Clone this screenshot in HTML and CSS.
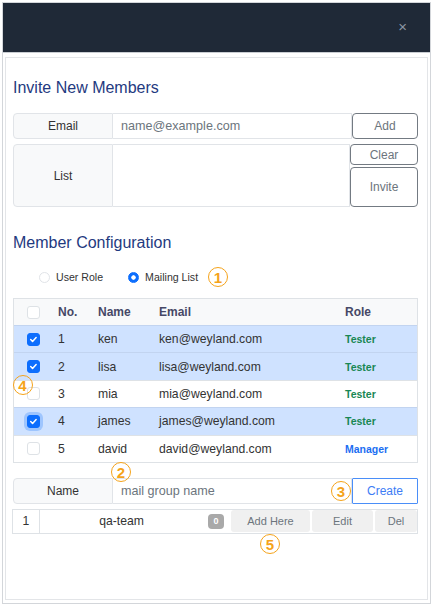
FILE: index.html
```html
<!DOCTYPE html>
<html>
<head>
<meta charset="utf-8">
<link rel="stylesheet" href="styles.css">
</head>
<body>
<div class="frame">
  <div class="topbar"><span class="close">×</span></div>
  <div class="body">
    <div class="card">
      <h2 class="title t1">Invite New Members</h2>
      <div class="group">
        <span class="lbl">Email</span>
        <input class="field" type="text" placeholder="name@example.com">
        <button class="btn add">Add</button>
      </div>
      <div class="group g-list">
        <span class="lbl">List</span>
        <textarea class="field area"></textarea>
        <div class="stack">
          <button class="btn clear">Clear</button>
          <button class="btn invite">Invite</button>
        </div>
      </div>

      <h2 class="title t2">Member Configuration</h2>
      <div class="radios">
        <label class="opt"><span class="radio"></span>User Role</label>
        <label class="opt"><span class="radio on"></span>Mailing List</label>
      </div>

      <div class="tbl">
        <div class="tr th">
          <span class="cbc"><span class="cb"></span></span>
          <span>No.</span><span>Name</span><span>Email</span><span>Role</span>
        </div>
        <div class="tr sel">
          <span class="cbc"><span class="cb on"><svg viewBox="0 0 13 13" width="11" height="11"><path d="M3.2 6.6 L5.4 8.8 L9.6 4.2" fill="none" stroke="#fff" stroke-width="1.8" stroke-linecap="round" stroke-linejoin="round"/></svg></span></span>
          <span>1</span><span>ken</span><span>ken@weyland.com</span><span class="role tester">Tester</span>
        </div>
        <div class="tr sel">
          <span class="cbc"><span class="cb on"><svg viewBox="0 0 13 13" width="11" height="11"><path d="M3.2 6.6 L5.4 8.8 L9.6 4.2" fill="none" stroke="#fff" stroke-width="1.8" stroke-linecap="round" stroke-linejoin="round"/></svg></span></span>
          <span>2</span><span>lisa</span><span>lisa@weyland.com</span><span class="role tester">Tester</span>
        </div>
        <div class="tr">
          <span class="cbc"><span class="cb"></span></span>
          <span>3</span><span>mia</span><span>mia@weyland.com</span><span class="role tester">Tester</span>
        </div>
        <div class="tr sel">
          <span class="cbc"><span class="cb on focus"><svg viewBox="0 0 13 13" width="11" height="11"><path d="M3.2 6.6 L5.4 8.8 L9.6 4.2" fill="none" stroke="#fff" stroke-width="1.8" stroke-linecap="round" stroke-linejoin="round"/></svg></span></span>
          <span>4</span><span>james</span><span>james@weyland.com</span><span class="role tester">Tester</span>
        </div>
        <div class="tr">
          <span class="cbc"><span class="cb"></span></span>
          <span>5</span><span>david</span><span>david@weyland.com</span><span class="role manager">Manager</span>
        </div>
      </div>

      <div class="group">
        <span class="lbl">Name</span>
        <input class="field" type="text" placeholder="mail group name">
        <button class="btn create">Create</button>
      </div>

      <div class="mrow">
        <span class="mno">1</span>
        <span class="mname">qa-team</span>
        <span class="badge">0</span>
        <button class="mbtn w-add">Add Here</button>
        <button class="mbtn w-edit">Edit</button>
        <button class="mbtn w-del">Del</button>
      </div>
    </div>
  </div>

  <span class="mark m1">1</span>
  <span class="mark m2">2</span>
  <span class="mark m3">3</span>
  <span class="mark m4">4</span>
  <span class="mark m5">5</span>
</div>
</body>
</html>
```

FILE: styles.css
```css
* { box-sizing: border-box; }
html, body { margin: 0; padding: 0; background: #fff; }
body { font-family: "Liberation Sans", Arial, sans-serif; color: #333; }

.frame {
  position: relative;
  margin: 2px;
  width: 429px;
  height: 602px;
  border: 1px solid #d3d6da;
  display: flex;
  flex-direction: column;
}
.topbar {
  height: 50px;
  flex: none;
  background: #1f2937;
  border-bottom: 1px solid #c9cdd2;
  display: flex;
  align-items: center;
  justify-content: flex-end;
  padding: 0 23px 3px 0;
}
.close { color: #8c96a3; font-size: 15px; line-height: 1; }

.body { flex: 1; padding: 4px 2px 3px 2px; display: flex; }
.card { flex: 1; border: 1px solid #e3e5e8; padding: 0 9px 0 7px; }

.title { margin: 0; font-size: 16px; line-height: 20px; font-weight: normal; color: #1f3a80; }
.t1 { margin-top: 20px; }
.t2 { margin-top: 26px; }

.group { display: flex; height: 26px; margin-top: 15px; }
.g-list { height: 63px; margin-top: 5px; }
.lbl {
  width: 100px; flex: none;
  background: #f8f9fa;
  border: 1px solid #e1e4e8;
  border-radius: 4px 0 0 4px;
  display: flex; align-items: center; justify-content: center;
  font-size: 12px; color: #333;
}
.field {
  flex: 1; min-width: 0;
  border: 1px solid #e1e4e8; border-left: 0;
  font: 12.6px "Liberation Sans", Arial, sans-serif;
  padding: 0 0 0 8px; margin: 0;
  color: #333; background: #fff; outline: none;
}
.field::placeholder { color: #6c757d; }
.area { resize: none; }

.btn {
  margin: 0; padding: 0;
  font: 12px "Liberation Sans", Arial, sans-serif;
  background: #fff; color: #6c757d;
  border: 1px solid #737a82; border-radius: 4px;
}
.add, .create { width: 66px; flex: none; }
.stack { width: 68px; flex: none; display: flex; flex-direction: column; gap: 2px; }
.clear { height: 21px; }
.invite { flex: 1; }
.create { border-color: #4a8ef8; color: #3d7cf5; border-radius: 1px; }

.radios {
  margin-top: 15px; height: 18px;
  display: flex; align-items: center; gap: 25px;
  padding-left: 26px;
  font-size: 10.6px; color: #333;
}
.opt { display: flex; align-items: center; gap: 6px; }
.radio { width: 11px; height: 11px; border-radius: 50%; border: 1px solid #e1e4e8; background: #fff; }
.radio.on { border-color: #0d6efd; background: radial-gradient(circle, #fff 0 1.9px, #0d6efd 2.5px); }

.tbl { margin-top: 12px; border: 1px solid #dee2e6; }
.tr {
  display: grid;
  grid-template-columns: 36px 40px 61px 186px 1fr;
  align-items: center;
  height: 27.4px;
  border-top: 1px solid #dee2e6;
  font-size: 12.2px; color: #333;
}
.tr > span { padding-left: 8px; }
.tr > .cbc { padding-left: 13px; display: flex; }
.th { height: 26px; border-top: 0; background: #f8f9fa; font-weight: bold; font-size: 12px; color: #464866; }
.sel { background: #cfe2ff; border-top-color: #c2d4f0; }
.cb {
  width: 13px; height: 13px;
  border: 1px solid #dee2e6; border-radius: 3px; background: #fff;
  display: flex; align-items: center; justify-content: center;
}
.cb.on { background: #0d6efd; border-color: #0d6efd; }
.cb.focus { box-shadow: 0 0 0 3px rgba(13, 110, 253, 0.25); }
.role { font-size: 10.5px; font-weight: bold; }
.tester { color: #198754; }
.manager { color: #1c6ef2; }

.mrow {
  margin-top: 5px; margin-left: -1px;
  height: 25px;
  border: 1px solid #dee2e6;
  display: flex; align-items: center;
}
.mno {
  width: 27px; height: 100%; flex: none;
  border-right: 1px solid #dee2e6;
  display: flex; align-items: center; justify-content: center;
  font-size: 12.2px;
}
.mname { width: 163px; flex: none; text-align: center; font-size: 12.2px; }
.badge {
  width: 16px; height: 15px; flex: none;
  margin: 0 7px 0 5px;
  background: #a9a9a9; color: #fff; border-radius: 4px;
  font-size: 9px; font-weight: bold;
  display: flex; align-items: center; justify-content: center;
}
.mbtn {
  height: 22px; flex: none;
  margin: 0; padding: 0;
  border: 0; border-radius: 3px;
  background: #f0f0f0; color: #6c757d;
  font: 11px "Liberation Sans", Arial, sans-serif;
}
.w-add { width: 79px; }
.w-edit { width: 61px; margin-left: 2px; }
.w-del { width: 42px; margin-left: 2px; }

.mark {
  position: absolute;
  width: 20px; height: 20px;
  border: 1.5px solid #f5a31a; border-radius: 50%;
  color: #f5a31a;
  font: bold 15px/1 "Liberation Sans", Arial, sans-serif;
  display: flex; align-items: center; justify-content: center;
}
.m1 { left: 205px; top: 264px; }
.m2 { left: 108px; top: 459px; }
.m3 { left: 328px; top: 478px; }
.m4 { left: 9.5px; top: 372px; }
.m5 { left: 257px; top: 531px; }
```
